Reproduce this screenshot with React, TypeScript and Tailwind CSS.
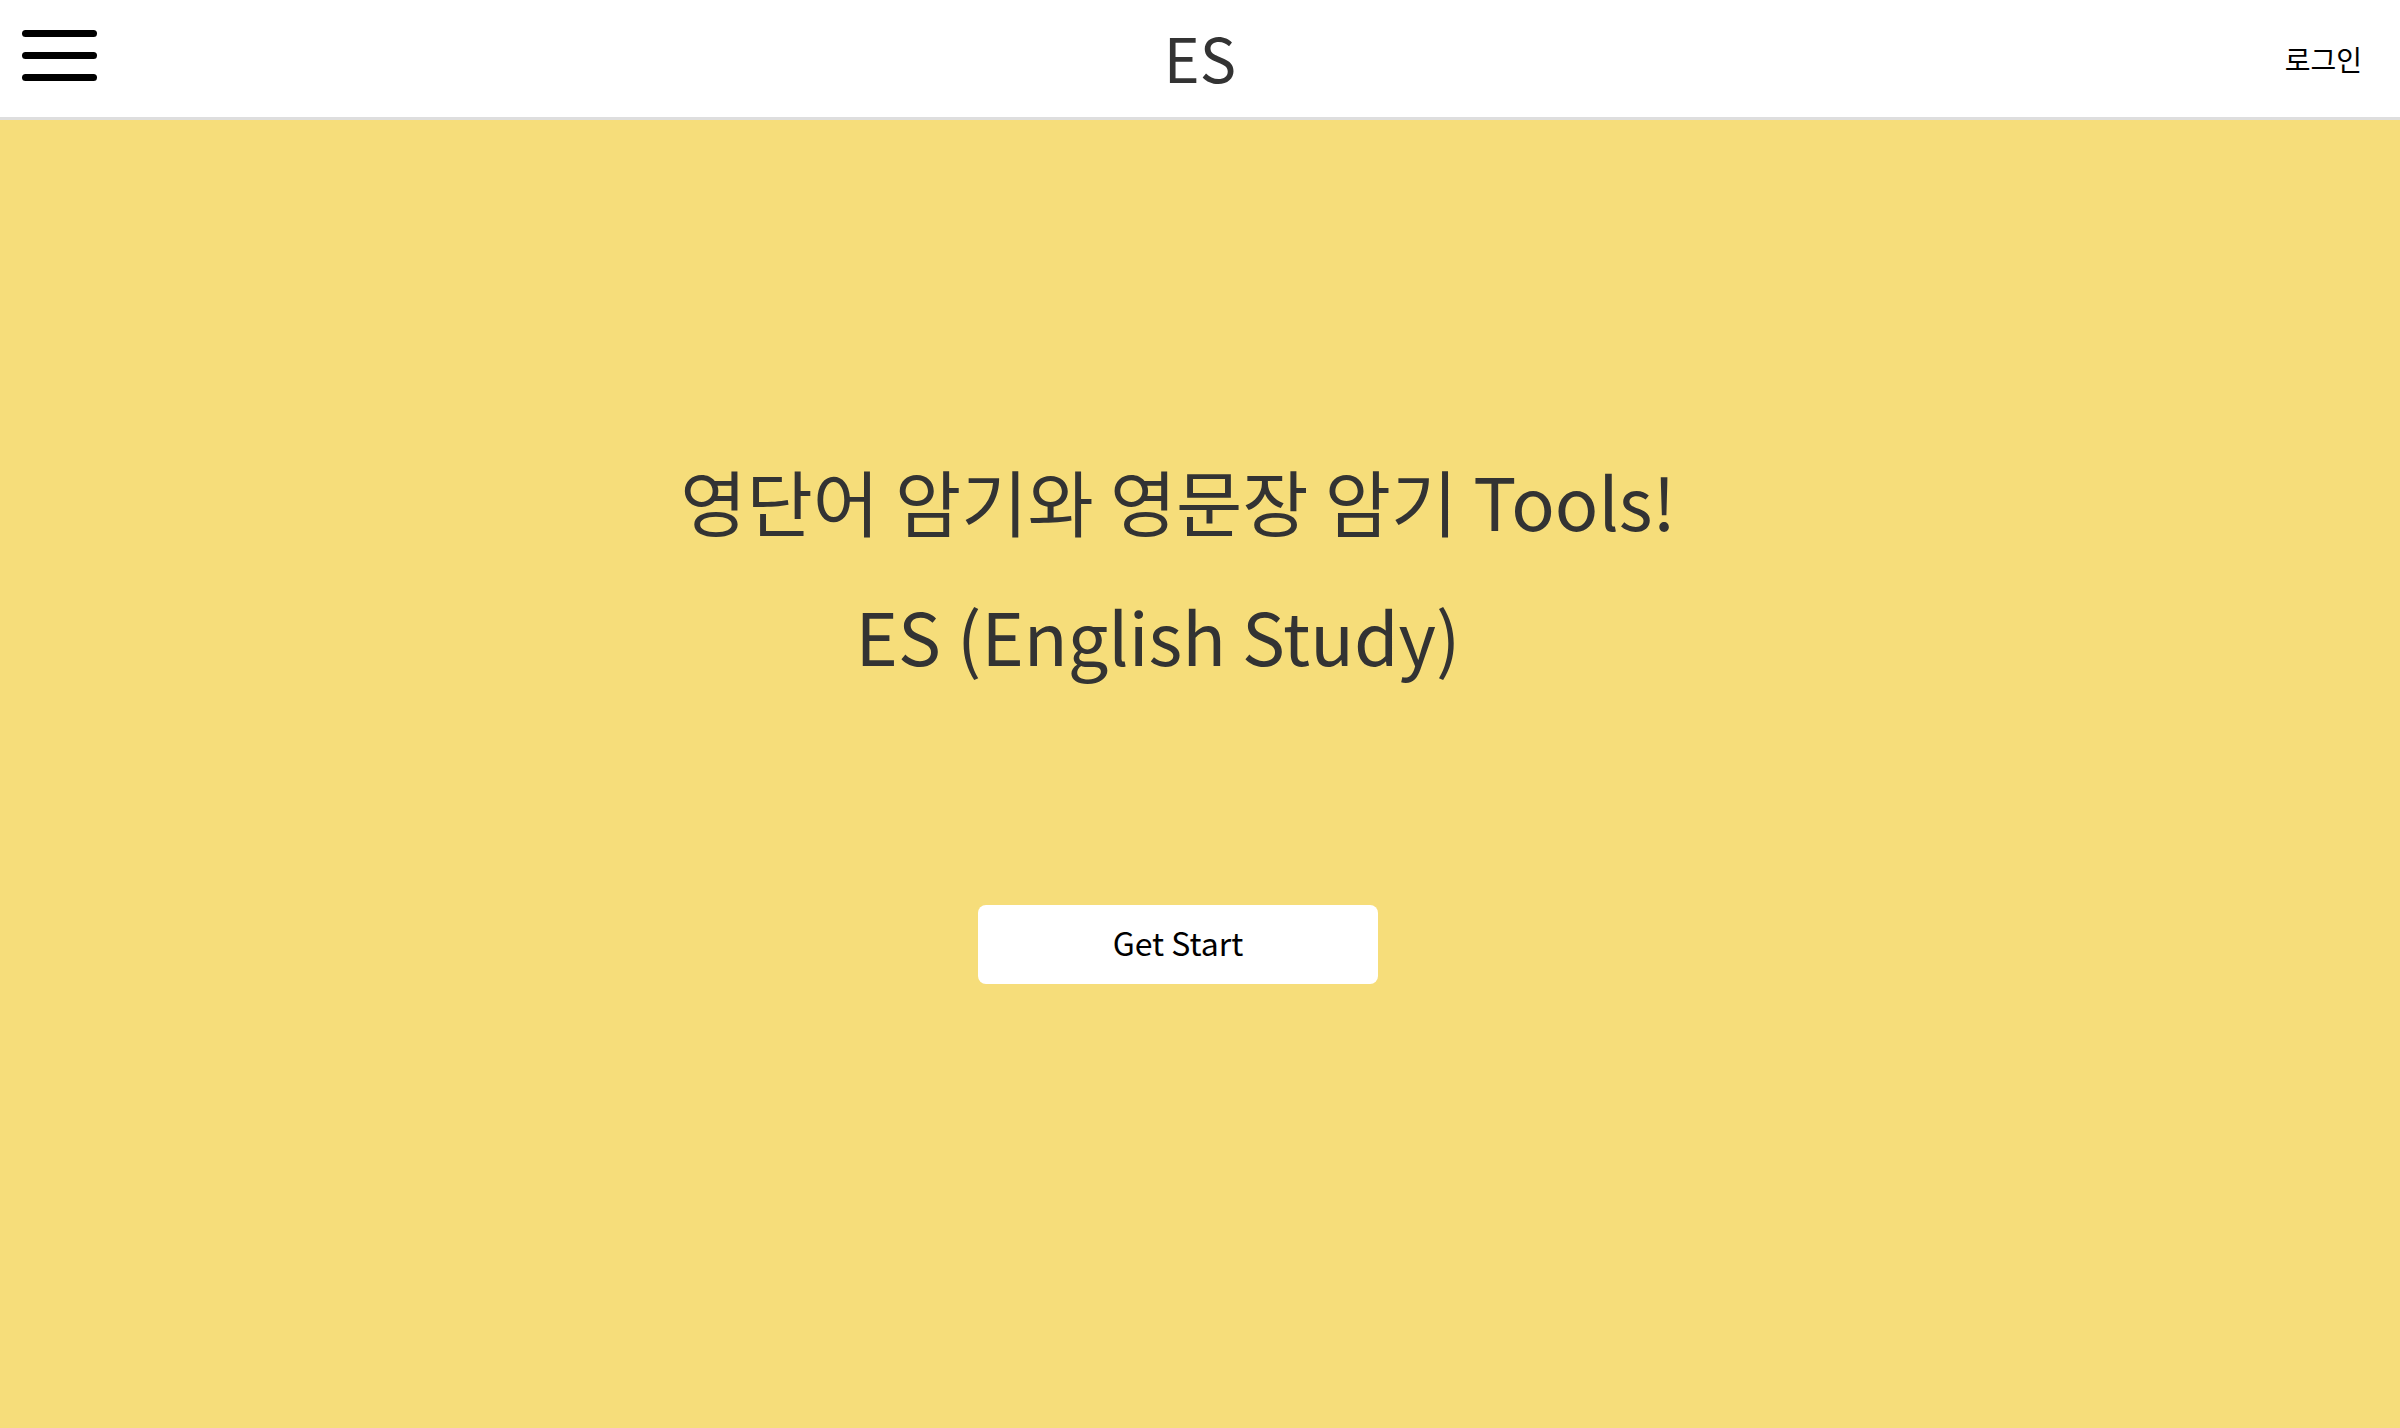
export default function App() {
  return (
    <div
      className="flex min-h-screen w-full flex-col bg-[#f6dd7a]"
      style={{ fontFamily: '"Noto Sans CJK KR", "Noto Sans", sans-serif' }}
    >
      <header className="relative flex h-[120px] items-center justify-between border-b-[3px] border-[#dedede] bg-white pl-[22px] pr-[38px]">
        <button className="-mt-[6px] flex w-[75px] flex-col gap-[15px]" aria-label="menu">
          <span className="block h-[7px] w-full rounded-full bg-black" />
          <span className="block h-[7px] w-full rounded-full bg-black" />
          <span className="block h-[7px] w-full rounded-full bg-black" />
        </button>
        <div className="absolute left-1/2 top-[26px] -translate-x-1/2 text-[61px] leading-none text-[#333]">ES</div>
        <button className="text-[28px] leading-none text-black">로그인</button>
      </header>

      <main className="flex flex-1 flex-col items-center pr-[44px] pt-[335px]">
        <h1 className="text-[72px] font-normal leading-[90px] text-[#333]">영단어 암기와 영문장 암기 Tools!</h1>
        <h2 className="mt-[45px] pr-[40px] text-[72px] font-normal leading-[90px] text-[#333]">ES (English Study)</h2>
        <button className="mt-[225px] h-[79px] w-[400px] rounded-lg bg-white pb-[5px] text-[32px] text-black">Get Start</button>
      </main>
    </div>
  )
}
